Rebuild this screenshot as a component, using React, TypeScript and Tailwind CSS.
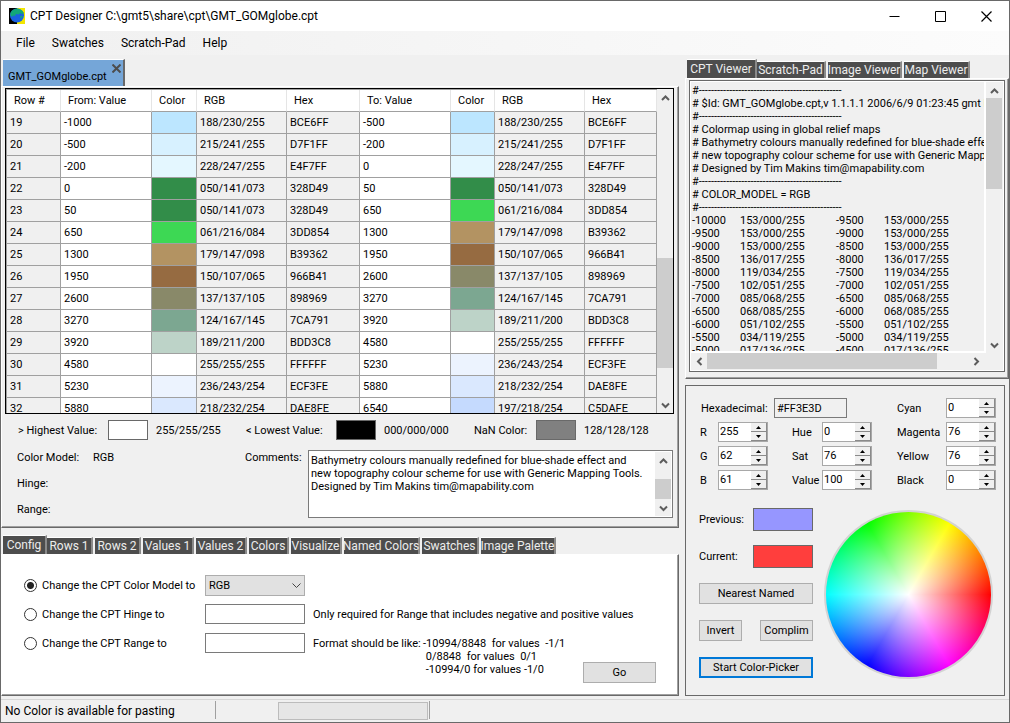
import { useState, type ReactNode } from "react";
import clsx from "clsx";

type Stop = { value: string; rgb: string; hex: string };

const STOPS: Stop[] = [
  { value: "-1000", rgb: "188/230/255", hex: "BCE6FF" },
  { value: "-500", rgb: "215/241/255", hex: "D7F1FF" },
  { value: "-200", rgb: "228/247/255", hex: "E4F7FF" },
  { value: "0", rgb: "050/141/073", hex: "328D49" },
  { value: "50", rgb: "050/141/073", hex: "328D49" },
  { value: "650", rgb: "061/216/084", hex: "3DD854" },
  { value: "1300", rgb: "179/147/098", hex: "B39362" },
  { value: "1950", rgb: "150/107/065", hex: "966B41" },
  { value: "2600", rgb: "137/137/105", hex: "898969" },
  { value: "3270", rgb: "124/167/145", hex: "7CA791" },
  { value: "3920", rgb: "189/211/200", hex: "BDD3C8" },
  { value: "4580", rgb: "255/255/255", hex: "FFFFFF" },
  { value: "5230", rgb: "236/243/254", hex: "ECF3FE" },
  { value: "5880", rgb: "218/232/254", hex: "DAE8FE" },
  { value: "6540", rgb: "197/218/254", hex: "C5DAFE" },
];

// the bathymetry rows end on their own colour, the land rows blend into the next one
const ROWS = STOPS.slice(0, -1).map((from, i) => {
  const next = STOPS[i + 1];
  const to = i < 3 ? { ...from, value: next.value } : next;
  return { id: 19 + i, from, to };
});

const RULE = "#" + "-".repeat(47);

const CPT_TEXT = [
  RULE,
  "# $Id: GMT_GOMglobe.cpt,v 1.1.1.1 2006/6/9 01:23:45 gmt Exp $",
  RULE,
  "# Colormap using in global relief maps",
  "# Bathymetry colours manually redefined for blue-shade effect and",
  "# new topography colour scheme for use with Generic Mapping Tools.",
  "# Designed by Tim Makins tim@mapability.com",
  RULE,
  "# COLOR_MODEL = RGB",
  RULE,
  "-10000\t153/000/255\t-9500\t153/000/255",
  "-9500\t153/000/255\t-9000\t153/000/255",
  "-9000\t153/000/255\t-8500\t153/000/255",
  "-8500\t136/017/255\t-8000\t136/017/255",
  "-8000\t119/034/255\t-7500\t119/034/255",
  "-7500\t102/051/255\t-7000\t102/051/255",
  "-7000\t085/068/255\t-6500\t085/068/255",
  "-6500\t068/085/255\t-6000\t068/085/255",
  "-6000\t051/102/255\t-5500\t051/102/255",
  "-5500\t034/119/255\t-5000\t034/119/255",
  "-5000\t017/136/255\t-4500\t017/136/255",
].join("\n");

const COMMENTS = [
  "Bathymetry colours manually redefined for blue-shade effect and",
  "new topography colour scheme for use with Generic Mapping Tools.",
  "Designed by Tim Makins tim@mapability.com",
].join("\n");

const VIEW_TABS = [
  { name: "CPT Viewer", width: "w-[70px]" },
  { name: "Scratch-Pad", width: "w-[69px]" },
  { name: "Image Viewer", width: "w-[74px]" },
  { name: "Map Viewer", width: "w-[66px]" },
];

const TOOL_TABS = [
  { name: "Config", width: "w-[44px]" },
  { name: "Rows 1", width: "w-[46px]" },
  { name: "Rows 2", width: "w-[46px]" },
  { name: "Values 1", width: "w-[51px]" },
  { name: "Values 2", width: "w-[51px]" },
  { name: "Colors", width: "w-[40px]" },
  { name: "Visualize", width: "w-[51px]" },
  { name: "Named Colors", width: "w-[76px]" },
  { name: "Swatches", width: "w-[57px]" },
  { name: "Image Palette", width: "w-[75px]" },
];

function Chevron({ dir }: { dir: "up" | "down" | "left" | "right" }) {
  const d = {
    up: "M1 7 L4.5 3.5 L8 7",
    down: "M1 2.5 L4.5 6 L8 2.5",
    left: "M6.5 1 L3 4.5 L6.5 8",
    right: "M2.5 1 L6 4.5 L2.5 8",
  }[dir];
  return (
    <svg viewBox="0 0 9 9" className="h-[9px] w-[9px]" fill="none" stroke="#5c5c5c" strokeWidth="2">
      <path d={d} />
    </svg>
  );
}

function ScrollBar({ thumb, horizontal }: { thumb: string; horizontal?: boolean }) {
  const button = "flex size-4 shrink-0 items-center justify-center";
  return (
    <div className={clsx("flex shrink-0 bg-[#f0f0f0]", horizontal ? "h-4" : "w-4 flex-col")}>
      <button type="button" aria-label="Scroll back" className={button}>
        <Chevron dir={horizontal ? "left" : "up"} />
      </button>
      <div className={clsx("flex flex-1", !horizontal && "flex-col")}>
        <div className={clsx("bg-[#cdcdcd]", thumb)} />
      </div>
      <button type="button" aria-label="Scroll forward" className={button}>
        <Chevron dir={horizontal ? "right" : "down"} />
      </button>
    </div>
  );
}

function Tabs({ tabs }: { tabs: { name: string; width: string }[] }) {
  const [active, setActive] = useState(tabs[0].name);
  return (
    <div role="tablist" className="flex h-[19px] items-end gap-[2px] pl-[2px] text-[12px]">
      {tabs.map((tab) => {
        const on = tab.name === active;
        return (
          <button
            key={tab.name}
            type="button"
            role="tab"
            aria-selected={on}
            onClick={() => setActive(tab.name)}
            className={clsx(
              "flex shrink-0 justify-center border-r-2 border-t border-r-[#8a8a8a] border-t-white bg-[#4d4d4d] whitespace-nowrap text-[#ececec]",
              tab.width,
              on ? "-mr-[2px] h-[19px] leading-[18px]" : "h-[17px] leading-4",
            )}
          >
            {tab.name}
          </button>
        );
      })}
    </div>
  );
}

function Bevel({ children, className }: { children: ReactNode; className?: string }) {
  return (
    <div
      className={clsx(
        "border border-t-white border-r-[#696969] border-b-[#696969] border-l-white shadow-[inset_-1px_-1px_#a0a0a0]",
        className,
      )}
    >
      {children}
    </div>
  );
}

function ColorTable() {
  const head = "border-r border-b border-r-[#e5e5e5] border-b-[#a0a0a0] pt-px pl-[7px] text-left font-normal";
  const cell = "border-r border-b border-[#a0a0a0] pt-px pl-[3px]";
  return (
    <div className="flex h-[326px] border border-black">
      <div className="min-w-0 flex-1 overflow-hidden border-l border-t border-[#a0a0a0]">
        <table className="w-full table-fixed border-separate border-spacing-0">
          <colgroup>
            <col className="w-[54px]" />
            <col className="w-[91px]" />
            <col className="w-[45px]" />
            <col className="w-[90px]" />
            <col className="w-[73px]" />
            <col className="w-[91px]" />
            <col className="w-[44px]" />
            <col className="w-[90px]" />
            <col className="w-[72px]" />
          </colgroup>
          <thead className="bg-white">
            <tr className="h-[22px]">
              {["Row #", "From: Value", "Color", "RGB", "Hex", "To: Value", "Color", "RGB", "Hex"].map((name, i) => (
                <th key={i} scope="col" className={head}>
                  {name}
                </th>
              ))}
            </tr>
          </thead>
          <tbody>
            {ROWS.map((row) => (
              <tr key={row.id} className="h-[22px]">
                <td className={cell}>{row.id}</td>
                {[row.from, row.to].map((stop, i) => (
                  <Cells key={i} stop={stop} cell={cell} />
                ))}
              </tr>
            ))}
          </tbody>
        </table>
      </div>
      <ScrollBar thumb="mt-[153px] h-[110px]" />
    </div>
  );
}

function Cells({ stop, cell }: { stop: Stop; cell: string }) {
  return (
    <>
      <td className={clsx(cell, "bg-white")}>{stop.value}</td>
      <td className={cell} style={{ backgroundColor: `#${stop.hex}` }} />
      <td className={cell}>{stop.rgb}</td>
      <td className={cell}>{stop.hex}</td>
    </>
  );
}

function Limit({ label, color, value }: { label: string; color: string; value: string }) {
  return (
    <>
      <span className="pt-[2px]">{label}</span>
      <span className={clsx("h-5 w-10 border border-[#696969]", color)} />
      <span className="pt-[2px] pl-2">{value}</span>
    </>
  );
}

function Document() {
  return (
    <section>
      <div className="flex pl-[2px]">
        <div className="flex h-[27px] w-[122px] items-end border-t border-r-2 border-t-white border-r-[#696969] bg-[#75a6d8] pb-px pl-[5px]">
          <span className="flex-1 leading-4">GMT_GOMglobe.cpt</span>
          <button type="button" aria-label="Close file" className="self-start pt-1 pr-[2px]">
            <svg viewBox="0 0 9 9" className="h-[9px] w-[9px]" stroke="#4d4d4d" strokeWidth="2">
              <path d="M0.5 0.5 L8.5 8.5 M8.5 0.5 L0.5 8.5" />
            </svg>
          </button>
        </div>
      </div>
      <Bevel className="pt-px pr-1 pb-[9px] pl-[3px]">
        <ColorTable />
        <div className="mt-[6px] grid grid-cols-[90px_40px_98px_90px_40px_98px_62px_40px_1fr] items-center pl-[13px]">
          <Limit label="> Highest Value:" color="bg-white" value="255/255/255" />
          <Limit label="< Lowest Value:" color="bg-black" value="000/000/000" />
          <Limit label="NaN Color:" color="bg-[#808080]" value="128/128/128" />
        </div>
        <div className="mt-[10px] flex h-[68px] pl-3 pr-px">
          <dl className="grid w-[228px] shrink-0 grid-cols-[76px_1fr] content-start gap-y-[13px] pt-px leading-[13px]">
            <dt>Color Model:</dt>
            <dd>RGB</dd>
            <dt>Hinge:</dt>
            <dd />
            <dt>Range:</dt>
            <dd />
          </dl>
          <label htmlFor="comments" className="w-[63px] shrink-0 pt-px leading-[13px]">
            Comments:
          </label>
          <div className="flex flex-1 border border-[#7a7a7a] bg-white p-px">
            <textarea
              id="comments"
              defaultValue={COMMENTS}
              className="flex-1 resize-none overflow-hidden pt-[2px] pl-px leading-[13px] whitespace-pre outline-none"
            />
            <ScrollBar thumb="mt-[11px] h-5" />
          </div>
        </div>
      </Bevel>
    </section>
  );
}

const RADIO =
  "mr-[5px] size-[13px] shrink-0 appearance-none rounded-full border border-[#333] bg-white checked:bg-[radial-gradient(circle,#222_0_3px,#fff_4px)]";
const FIELD = "h-5 w-[100px] border border-[#7a7a7a] bg-white px-1 outline-none";
const BUTTON = "h-[21px] border border-[#adadad] bg-[#e1e1e1] pt-px";

function Config() {
  return (
    <section>
      <Tabs tabs={TOOL_TABS} />
      <Bevel className="flex items-end bg-white">
        <form className="grid h-[140px] flex-1 grid-cols-[181px_100px_1fr] grid-rows-[20px_20px_20px] items-center gap-y-[9px] pt-5 pl-[22px]">
          <label className="flex items-center">
            <input type="radio" name="change" defaultChecked className={RADIO} />
            <span className="pt-px">Change the CPT Color Model to</span>
          </label>
          <div className="relative">
            <select aria-label="Color model" className="block h-[21px] w-full appearance-none border border-[#adadad] bg-[#e1e1e1] pt-px pl-[3px] outline-none">
              <option>RGB</option>
              <option>HSV</option>
              <option>CMYK</option>
            </select>
            <svg viewBox="0 0 9 6" className="pointer-events-none absolute top-2 right-1 h-[6px] w-[9px]" fill="none" stroke="#444">
              <path d="M0.5 0.5 L4.5 4.5 L8.5 0.5" />
            </svg>
          </div>
          <span />
          <label className="flex items-center">
            <input type="radio" name="change" className={RADIO} />
            <span className="pt-px">Change the CPT Hinge to</span>
          </label>
          <input type="text" aria-label="Hinge" className={FIELD} />
          <span className="pt-px pl-2 whitespace-nowrap">Only required for Range that includes negative and positive values</span>
          <label className="flex items-center">
            <input type="radio" name="change" className={RADIO} />
            <span className="pt-px">Change the CPT Range to</span>
          </label>
          <input type="text" aria-label="Range" className={FIELD} />
          <div className="flex self-start pt-1 pl-2 leading-[13px]">
            <span className="w-[110px] shrink-0">Format should be like:</span>
            <span className="whitespace-pre">{"-10994/8848  for values  -1/1\n 0/8848  for values  0/1\n -10994/0 for values -1/0"}</span>
          </div>
        </form>
        <button type="button" className={clsx(BUTTON, "-ml-[95px] mr-[22px] mb-3 w-[73px]")}>
          Go
        </button>
      </Bevel>
    </section>
  );
}

function Viewer() {
  return (
    <section>
      <Tabs tabs={VIEW_TABS} />
      <Bevel className="pt-px pr-[3px] pb-[6px] pl-[3px]">
        <div className="border border-[#696969]">
          <div className="flex h-[290px] border border-white">
            <div className="flex min-w-0 flex-1 flex-col">
              <textarea
                aria-label="CPT file"
                readOnly
                wrap="off"
                value={CPT_TEXT}
                className="block min-h-0 flex-1 resize-none overflow-hidden pt-[2px] pl-px leading-[13px] whitespace-pre outline-none [tab-size:48px]"
              />
              <div className="mb-px border-t-2 border-white">
                <ScrollBar horizontal thumb="w-[230px]" />
              </div>
            </div>
            <div className="mr-px mb-[17px] flex border-l-2 border-white">
              <ScrollBar thumb="h-[91px]" />
            </div>
          </div>
        </div>
      </Bevel>
    </section>
  );
}

function Stepper({ label, value, className }: { label: string; value: number; className?: string }) {
  const [current, setCurrent] = useState(value);
  const step = "flex h-[9px] w-4 items-center justify-center border-r border-b border-[#8a8a8a] bg-[#f0f0f0]";
  return (
    <>
      <label htmlFor={label} className={clsx("pt-px", className)}>
        {label}
      </label>
      <div className="flex h-5 w-[50px] border border-[#a8a8a8] bg-white">
        <input
          id={label}
          value={current}
          onChange={(e) => setCurrent(Number(e.target.value) || 0)}
          className="h-4 w-8 bg-white pl-px outline-none"
        />
        <div>
          <button type="button" aria-label={`${label} up`} className={step} onClick={() => setCurrent(current + 1)}>
            <svg viewBox="0 0 5 3" className="h-[3px] w-[5px]">
              <path d="M0 3 L2.5 0 L5 3 Z" />
            </svg>
          </button>
          <button type="button" aria-label={`${label} down`} className={step} onClick={() => setCurrent(current - 1)}>
            <svg viewBox="0 0 5 3" className="h-[3px] w-[5px]">
              <path d="M0 0 L2.5 3 L5 0 Z" />
            </svg>
          </button>
        </div>
      </div>
    </>
  );
}

function Picker() {
  return (
    <section className="mt-[6px] mr-1 border border-[#696969] pt-3 pb-4 pl-[13px]">
      <div className="grid grid-cols-[19px_50px_54px_50px_74px_50px] items-center gap-y-1">
        <div className="col-span-4 flex items-center">
          <label htmlFor="hex" className="w-[75px] pt-[2px] pl-[2px]">
            Hexadecimal:
          </label>
          <input id="hex" defaultValue="#FF3E3D" className="h-5 w-[73px] border border-[#7a7a7a] bg-[#f0f0f0] pl-[2px] outline-none" />
        </div>
        <Stepper label="Cyan" value={0} className="pl-[25px]" />
        <Stepper label="R" value={255} className="pl-px" />
        <Stepper label="Hue" value={0} className="pl-6" />
        <Stepper label="Magenta" value={76} className="pl-[25px]" />
        <Stepper label="G" value={62} className="pl-px" />
        <Stepper label="Sat" value={76} className="pl-6" />
        <Stepper label="Yellow" value={76} className="pl-[25px]" />
        <Stepper label="B" value={61} className="pl-px" />
        <Stepper label="Value" value={100} className="pl-6" />
        <Stepper label="Black" value={0} className="pl-[25px]" />
      </div>
      <div className="mt-[18px] flex gap-[11px]">
        <div className="flex w-[114px] flex-col gap-[14px]">
          <div className="flex h-[23px] items-center justify-between">
            <span className="pt-px">Previous:</span>
            <span className="h-[23px] w-[60px] border border-[#696969] bg-[#9696ff]" />
          </div>
          <div className="flex h-[23px] items-center justify-between">
            <span className="pt-px">Current:</span>
            <span className="h-[23px] w-[60px] border border-[#696969] bg-[#ff3e3d]" />
          </div>
          <div className="flex h-[23px] items-center">
            <button type="button" className={clsx(BUTTON, "flex-1")}>
              Nearest Named
            </button>
          </div>
          <div className="flex h-[23px] items-center justify-between">
            <button type="button" className={clsx(BUTTON, "w-[43px]")}>
              Invert
            </button>
            <button type="button" className={clsx(BUTTON, "w-[53px]")}>
              Complim
            </button>
          </div>
          <div className="flex h-[23px] items-center">
            <button type="button" className="h-[21px] flex-1 border-2 border-[#0078d7] bg-[#e1e1e1] pt-px leading-4">
              Start Color-Picker
            </button>
          </div>
        </div>
        <div className="mt-[2px] size-[169px] rounded-full bg-[#d3d3d3] p-[2px]">
          <div className="size-full rounded-full bg-[radial-gradient(closest-side,#fff,rgba(255,255,255,0)),conic-gradient(from_90deg,#f00,#f0f,#00f,#0ff,#0f0,#ff0,#f00)]" />
        </div>
      </div>
    </section>
  );
}

export default function App() {
  return (
    <div className="flex min-h-screen flex-col border border-[#696969] bg-[#f0f0f0] font-['Roboto',Arial,sans-serif] text-[11px] leading-[14px] text-black">
      <header className="flex h-[30px] items-center bg-white pl-2 text-[12px]">
        <svg viewBox="0 0 16 16" className="mr-[5px] size-4">
          <path fill="#000" d="M0 0h8v16H0z" />
          <path fill="#f2e600" d="M8 0h8v16H8z" />
          <circle cx="8" cy="7.5" r="7" fill="#1a62e0" />
          <path fill="#12a878" d="M1.5 5Q3 1 8 0.5Q13 1 14.8 5L13 6L11 5L10 6.5L7 6L6 8L4 7.5L3 9L1.2 7Z M11 8L14 8L12 11Z" />
        </svg>
        <h1 className="flex-1">CPT Designer C:\gmt5\share\cpt\GMT_GOMglobe.cpt</h1>
        <div className="flex">
          <button type="button" aria-label="Minimize" className="flex w-[45px] justify-center">
            <svg viewBox="0 0 11 11" className="size-[11px]" fill="none" stroke="#000">
              <path d="M0.5 5.5h10" />
            </svg>
          </button>
          <button type="button" aria-label="Maximize" className="flex w-[46px] justify-center">
            <svg viewBox="0 0 11 11" className="size-[11px]" fill="none" stroke="#000">
              <path d="M0.5 0.5h10v10h-10z" />
            </svg>
          </button>
          <button type="button" aria-label="Close" className="flex w-[46px] justify-center">
            <svg viewBox="0 0 11 11" className="size-[11px]" fill="none" stroke="#000" strokeWidth="1.2">
              <path d="M0.5 0.5l10 10M10.5 0.5l-10 10" />
            </svg>
          </button>
        </div>
      </header>
      <nav className="flex h-6 items-center gap-[17px] bg-linear-to-r from-[#f0f0f0] to-[#fcfcfc] pl-[15px] text-[12px]">
        <button type="button">File</button>
        <button type="button">Swatches</button>
        <button type="button">Scratch-Pad</button>
        <button type="button">Help</button>
      </nav>
      <main className="flex flex-1 pb-[3px]">
        <div className="flex min-w-0 flex-1 flex-col gap-[7px] pt-1">
          <Document />
          <Config />
        </div>
        <div className="ml-[6px] w-[324px] shrink-0 pt-1">
          <Viewer />
          <Picker />
        </div>
      </main>
      <footer className="flex h-[23px] items-start border-t border-[#d7d7d7] pl-1 text-[12px]">
        <span className="w-[210px] leading-[22px]">No Color is available for pasting</span>
        <span className="mt-px h-[18px] w-[63px] border-l border-[#a0a0a0]" />
        <progress
          aria-label="Progress"
          value={0}
          className="mt-[2px] h-[18px] w-[150px] appearance-none border border-[#bcbcbc] [&::-webkit-progress-bar]:bg-[#e6e6e6]"
        />
        <span className="mt-px ml-px h-[18px] border-l border-[#a0a0a0]" />
      </footer>
    </div>
  );
}
